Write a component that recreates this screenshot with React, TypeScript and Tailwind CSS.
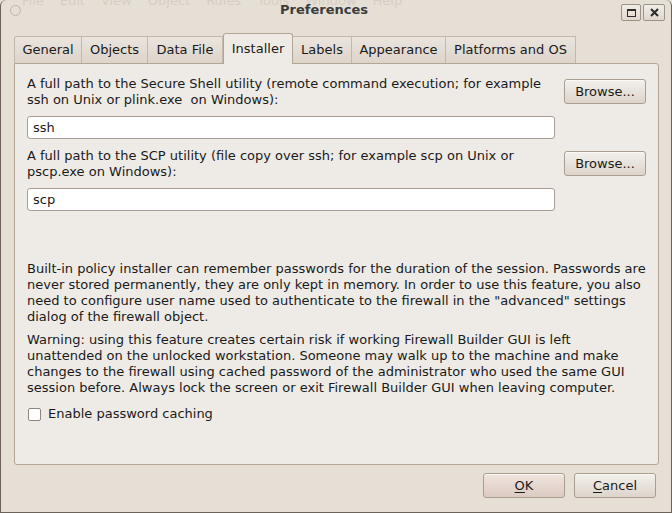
import React from "react";

const font = { fontFamily: '"DejaVu Sans", "Liberation Sans", sans-serif' };

function Tab({ label, active, w }: { label: string; active?: boolean; w: string }) {
  if (active) {
    return (
      <div className={"relative z-10 -mb-px flex h-[31px] items-center justify-center rounded-t-[3px] border border-b-0 border-[#b3a697] bg-[#eeebe6] text-[13px] text-[#1a1a1a] " + w}>
        <span className="-mt-[1px]">{label}</span>
      </div>
    );
  }
  return (
    <div className={"flex h-[27px] items-center justify-center border border-b-0 border-l-0 border-[#c3b8ab] bg-gradient-to-b from-[#ebe5de] to-[#ddd4ca] text-[13px] text-[#1a1a1a] first:rounded-tl-[3px] first:border-l " + w}>
      {label}
    </div>
  );
}

function Btn({ children, def, className }: { children: React.ReactNode; def?: boolean; className?: string }) {
  return (
    <div
      className={
        "flex h-[25px] w-[82px] items-center justify-center rounded-[3px] border border-[#a99d90] text-[13px] text-[#1a1a1a] shadow-[inset_0_1px_0_#fbf9f7] " +
        (def
          ? "bg-gradient-to-b from-[#efe5df] to-[#dccbc2] "
          : "bg-gradient-to-b from-[#f3f0ec] to-[#ddd5cc] ") +
        (className || "")
      }
    >
      {children}
    </div>
  );
}

export default function App() {
  return (
    <div style={font} className="relative h-[513px] w-[672px] overflow-hidden bg-[#e6dfd6]">
      {/* faint background menu showing through title bar */}
      <div className="absolute left-[22px] top-[-9px] flex gap-[16px] text-[13px] text-[#d6cec4]">
        <span>File</span>
        <span>Edit</span>
        <span>View</span>
        <span>Object</span>
        <span>Rules</span>
        <span>Tools</span>
        <span>Window</span>
        <span>Help</span>
      </div>
      {/* window frame */}
      <div className="absolute inset-0 rounded-t-[6px] border-x border-b border-[#6b635a]">
        {/* title bar */}
        <div className="relative flex h-[22px] items-center justify-center">
          <div className="absolute left-[9px] top-[5px] h-[11px] w-[11px] rounded-full border border-[#bdb5ab]" />
          <span className="ml-[-24px] mt-[-2px] text-[13px] font-bold text-[#3c3c3c]">Preferences</span>
          <div className="absolute right-[30px] top-[4px] flex h-[17px] w-[20px] items-center justify-center rounded-[2px] border border-[#9c9388] bg-gradient-to-b from-[#f0ece7] to-[#e0d8cf]">
            <div className="h-[8px] w-[9px] border border-t-2 border-[#2b2b2b]" />
          </div>
          <div className="absolute right-[6px] top-[4px] flex h-[17px] w-[22px] items-center justify-center rounded-[2px] border border-[#9c9388] bg-gradient-to-b from-[#f0ece7] to-[#e0d8cf]">
            <svg width="9" height="9" viewBox="0 0 9 9">
              <path d="M1 1L8 8M8 1L1 8" stroke="#2b2b2b" strokeWidth="2" />
            </svg>
          </div>
        </div>

        {/* tabs */}
        <div className="ml-[13px] mt-[11px] flex items-end">
          <Tab label="General" w="w-[68px]" />
          <Tab label="Objects" w="w-[66px]" />
          <Tab label="Data File" w="w-[75px]" />
          <Tab label="Installer" w="w-[70px]" active />
          <Tab label="Labels" w="w-[59px]" />
          <Tab label="Appearance" w="w-[94px]" />
          <Tab label="Platforms and OS" w="w-[130px]" />
        </div>

        {/* panel */}
        <div className="ml-[13px] flex h-[402px] w-[645px] flex-col rounded-b-[3px] rounded-tr-[3px] border border-[#b3a697] bg-[#eeebe6] pl-[12px] pr-[12px] pt-[12px] text-[13px] leading-[16px] text-[#1a1a1a]">
          <div className="flex">
            <div className="w-[528px]">
              <div className="whitespace-nowrap">
                A full path to the Secure Shell utility (remote command execution; for example
                <br />
                ssh on Unix or plink.exe&nbsp; on Windows):
              </div>
              <div className="mt-[8px] flex h-[23px] items-center rounded-[3px] border border-[#a79d92] bg-white pl-[5px] text-[13px]">
                ssh
              </div>
            </div>
            <Btn className="ml-[9px] mt-[3px]">Browse...</Btn>
          </div>
          <div className="mt-[9px] flex">
            <div className="w-[528px]">
              <div className="whitespace-nowrap">
                A full path to the SCP utility (file copy over ssh; for example scp on Unix or
                <br />
                pscp.exe on Windows):
              </div>
              <div className="mt-[8px] flex h-[23px] items-center rounded-[3px] border border-[#a79d92] bg-white pl-[5px] text-[13px]">
                scp
              </div>
            </div>
            <Btn className="ml-[9px] mt-[3px]">Browse...</Btn>
          </div>

          <div className="mt-[50px] whitespace-nowrap">
            Built-in policy installer can remember passwords for the duration of the session. Passwords are
            <br />
            never stored permanently, they are only kept in memory. In order to use this feature, you also
            <br />
            need to configure user name used to authenticate to the firewall in the "advanced" settings
            <br />
            dialog of the firewall object.
          </div>
          <div className="mt-[7px] whitespace-nowrap">
            Warning: using this feature creates certain risk if working Firewall Builder GUI is left
            <br />
            unattended on the unlocked workstation. Someone may walk up to the machine and make
            <br />
            changes to the firewall using cached password of the administrator who used the same GUI
            <br />
            session before. Always lock the screen or exit Firewall Builder GUI when leaving computer.
          </div>
          <div className="mt-[10px] flex items-center">
            <div className="ml-[1px] h-[13px] w-[13px] rounded-[2px] border border-[#8f857a] bg-white" />
            <span className="ml-[7px]">Enable password caching</span>
          </div>
        </div>

        {/* bottom buttons */}
        <div className="mr-[15px] mt-[8px] flex justify-end gap-[9px]">
          <Btn def>
            <span className="underline underline-offset-2">O</span>K
          </Btn>
          <Btn>
            <span className="underline underline-offset-2">C</span>ancel
          </Btn>
        </div>
      </div>
    </div>
  );
}
